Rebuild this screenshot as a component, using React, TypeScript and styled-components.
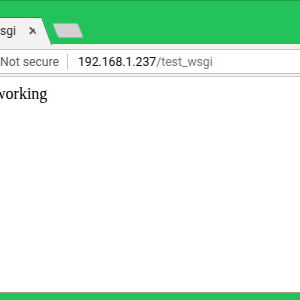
import React from "react";
import styled, { createGlobalStyle } from "styled-components";

const Global = createGlobalStyle`
  html, body { margin: 0; padding: 0; background: #fff; overflow: hidden; }
  #root { width: 300px; height: 300px; }
`;

const Frame = styled.div`
  width: 300px;
  height: 300px;
  display: flex;
  flex-direction: column;
  overflow: hidden;
  font-family: Roboto, "Noto Sans", sans-serif;
`;

const TitleBar = styled.div`
  height: 43px;
  flex: none;
  background: #22c35b;
  border-top: 1px solid #1b9f48;
  display: flex;
  align-items: flex-end;
  box-sizing: content-box;
`;

const Tab = styled.div`
  position: relative;
  height: 27px;
  width: 46px;
  margin-left: -6px;
  background: #f2f2f2;
  border-top: 1px solid #1a9a45;
  display: flex;
  align-items: center;
  gap: 12px;
  padding-left: 6px;
  box-sizing: border-box;
  z-index: 1;
  &::after {
    content: "";
    position: absolute;
    top: -1px;
    right: -2px;
    width: 12px;
    height: 28px;
    background: #f2f2f2;
    border-right: 1px solid #1a9a45;
    border-top: 1px solid #1a9a45;
    transform: skewX(20deg);
    transform-origin: top left;
    box-sizing: border-box;
  }
`;

const TabTitle = styled.span`
  font-size: 12px;
  color: #333;
  line-height: 1;
`;

const CloseX = styled.span`
  font-size: 12px;
  color: #5a5a5a;
  line-height: 1;
  font-weight: 700;
`;

const NewTab = styled.div`
  width: 26px;
  height: 15px;
  margin-left: 15px;
  margin-bottom: 6px;
  background: #d2d2d2;
  border: 1px solid #8fbf9e;
  border-radius: 2px;
  transform: skewX(22deg);
  box-sizing: border-box;
`;

const Toolbar = styled.div`
  height: 33px;
  flex: none;
  background: #f2f2f2;
  border-bottom: 1px solid #c9c9c9;
  box-sizing: border-box;
  display: flex;
  align-items: center;
  padding-top: 3px;
`;

const Omnibox = styled.div`
  flex: 1;
  height: 25px;
  margin-left: -12px;
  margin-right: -10px;
  background: #fff;
  border: 1px solid #c3c3c3;
  border-radius: 2px;
  box-sizing: border-box;
  display: flex;
  align-items: center;
  padding-left: 11px;
  font-size: 12.2px;
  white-space: nowrap;
`;

const Secure = styled.span`
  color: #5f5f5f;
`;

const Divider = styled.span`
  width: 1px;
  height: 16px;
  background: #c8c8c8;
  margin: 0 10px 0 8px;
`;

const Host = styled.span`
  color: #111;
`;

const Path = styled.span`
  color: #7a7a7a;
`;

const Content = styled.div`
  flex: 1;
  padding: 8px 0 0 0;
  margin-left: -6px;
  font-family: "Liberation Serif", "Times New Roman", serif;
  font-size: 16px;
  color: #000;
`;

const BottomBar = styled.div`
  height: 7px;
  flex: none;
  background: #22c35b;
  border-top: 1px solid #9a9a9a;
`;

export default function App() {
  return (
    <>
      <Global />
      <Frame>
        <TitleBar>
          <Tab>
            <TabTitle>sgi</TabTitle>
            <CloseX>✕</CloseX>
          </Tab>
          <NewTab />
        </TitleBar>
        <Toolbar>
          <Omnibox>
            <Secure>Not secure</Secure>
            <Divider />
            <Host>192.168.1.237</Host>
            <Path>/test_wsgi</Path>
          </Omnibox>
        </Toolbar>
        <Content>working</Content>
        <BottomBar />
      </Frame>
    </>
  );
}
